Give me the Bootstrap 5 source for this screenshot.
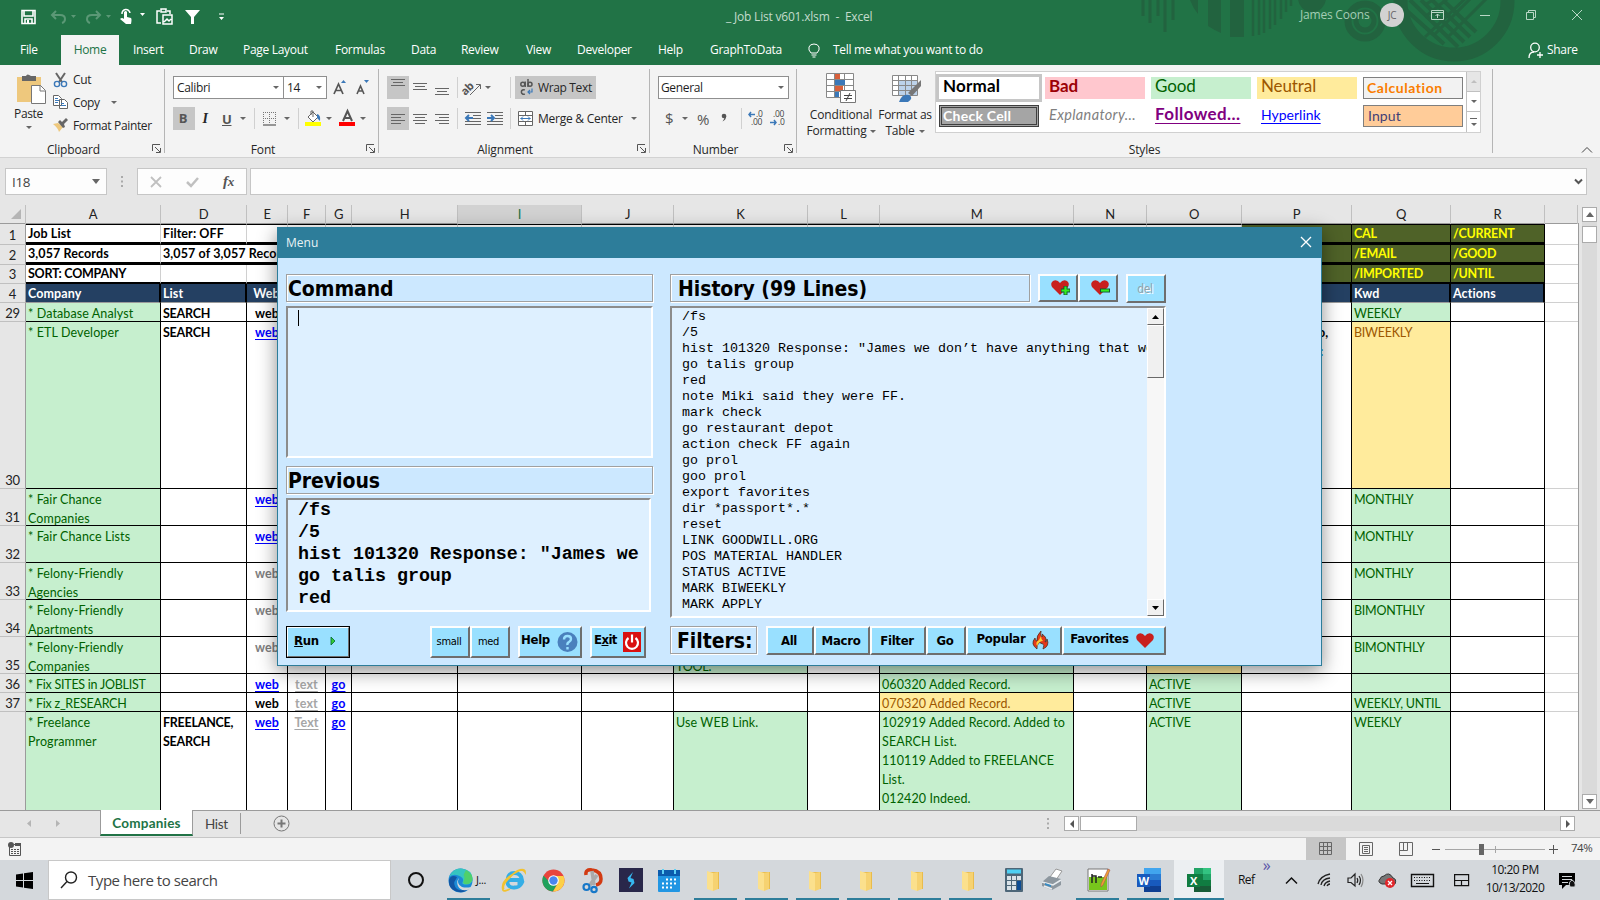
<!DOCTYPE html>
<html lang="en">
<head>
<meta charset="utf-8">
<title>_Job List v601.xlsm - Excel</title>
<link href="https://cdn.jsdelivr.net/npm/bootstrap@5.3.0/dist/css/bootstrap.min.css" rel="stylesheet">
<style>
:root{--xl:#217346;--ink:#262626}
body{width:1600px;height:900px;overflow:hidden;background:#e6e6e6;font:12px/16px "Open Sans","Noto Sans",sans-serif;color:var(--ink);letter-spacing:-.35px}
svg{display:block;flex:none;overflow:visible}
.gridrow{display:grid;align-items:center;white-space:nowrap}
.caret{width:0;height:0;border:3px solid transparent;border-top:3.5px solid #666;border-bottom:0}
/* title bar and tabs */
.titlezone{height:65px;background:var(--xl);color:#fff}
.titlezone .deco{left:1130px;top:0;overflow:hidden}
.quick{height:33px;margin-bottom:2px;letter-spacing:-.2px;grid-template-columns:20px 30px 36px 35px 36px 28px 33px 508px 574px 35px 43px 46px 46px 46px 60px}
.winctl{left:1300px;top:0;height:30px;letter-spacing:-.2px;grid-template-columns:80px 51px 48px 46px 46px 20px}
.ttl{color:#c3dccd}
.avatar{width:24px;height:24px;background:#d2d2d2;color:#666;font-size:10px}
.tabs{height:30px;letter-spacing:-.3px;grid-template-columns:20px 41px 58px 14px 56px 54px 92px 76px 50px 65px 51px 81px 52px 97px 26px 695px 19px 50px}
.tabs .on{background:#f3f3f3;color:var(--xl);line-height:30px;text-align:center}
/* ribbon */
.ribbon{height:93px;background:#f3f3f3;border-bottom:1px solid #d2d2d2}
.grp{position:relative;border-right:1px solid #b5b5b5;height:84px;margin-top:4px;flex:none}
.grp .cap{height:16px;line-height:17px;text-align:center;letter-spacing:-.15px}
.g1{width:165px}.g2{width:214px}.g3{width:271px}.g4{width:147px}.g5{width:696px}
.launch{position:absolute;right:3px;bottom:0}
.body{height:72px}
.clip{margin-top:-1px}
.clip>div{height:23px;gap:6px}
.combo{height:23px;background:#fff;border:1px solid #8f8f8f;line-height:20px;padding:0 4px;color:#1e1e1e}
.tog{background:#c6c6c6;height:23px}
.vsep{width:1px;height:21px;background:#d0d0d0}
.ggray{color:#555;font-weight:700;font-size:13px}
/* styles gallery */
.gallery{width:546px;height:62px;background:#fff;border:1px solid #d0d0d0;margin-top:2px}
.cells{display:grid;grid-template-columns:repeat(5,100px);align-content:start;gap:6px;padding:5px 0 0 3px;width:531px;font-family:Lato,sans-serif}
.cells div{height:22px;line-height:20px;padding-left:4px;white-space:nowrap}
.gs{width:14px;background:#fff;border-left:1px solid #c0c0c0}
.gs div{height:20px;border-bottom:1px solid #c0c0c0}
.cells .s-normal{outline:3px solid #c6c6c6;font:700 17px/18px Lato;color:#000;letter-spacing:.2px}
.cells .s-bad{background:#ffc7ce;color:#9c0006;font:700 17px/18px Lato;letter-spacing:-.1px}
.cells .s-good{background:#c6efce;color:#006100;font-size:17px;line-height:18px;letter-spacing:-.1px}
.cells .s-neutral{background:#ffeb9c;color:#9c5700;font-size:17px;line-height:18px;letter-spacing:-.1px}
.cells .s-calc{background:#f2f2f2;border:1px solid #7f7f7f;color:#fa7d00;font-weight:700;font-size:14px;letter-spacing:.55px;padding-left:3px}
.cells .s-check{background:#a5a5a5;border:3px double #3f3f3f;color:#fff;font-weight:700;font-size:14px;line-height:15px;padding-left:1px;letter-spacing:.25px}
.cells .s-expl{color:#7f7f7f;font-style:italic;font-size:14.5px;letter-spacing:.35px}
.cells .s-foll{color:#800080;font:700 17px/17px Lato;text-decoration:underline;text-underline-offset:3px;letter-spacing:.4px}
.cells .s-link{color:#00f;text-decoration:underline;font-size:14px;text-underline-offset:3px;letter-spacing:0}
.cells .s-input{background:#fc9;border:1px solid #7f7f7f;color:#3f3f76;font-size:14px;letter-spacing:.1px}
/* formula bar */
.fbar{height:47px;padding-top:10px;grid-template-columns:5px 102px 30px 110px 3px 1337px;align-items:start}
.fbox{height:27px;background:#fdfdfd;border:1px solid #c6c6c6}
/* sheet */
.sheet{height:605px;position:relative}
.cols,.srow{display:grid;grid-template-columns:26px 135px 86px 41px 38px 26px 106px 124px 92px 134px 72px 194px 73px 95px 110px 99px 94px 33px;width:1579px}
.cols{height:19px;font:13px/19px Lato;color:#222;text-align:center;border-bottom:1px solid #9b9b9b}
.cols div{border-right:1px solid #c0c0c0;line-height:19px}
.cols .sel{background:#d2d2d2;border-bottom:2px solid var(--xl);color:var(--xl)}
.cells-zone{height:586px;overflow:hidden;width:1579px;border-right:1px solid #9b9b9b}
.srow{font:12.5px/19px Lato,sans-serif;letter-spacing:.1px}
.srow>div{border-right:1px solid #000;border-bottom:1px solid #000;background:#fff;padding:1px 0 0 2px;overflow:hidden;color:#000;white-space:pre-line;font-weight:700}
.srow>.caps{letter-spacing:-.25px}
.srow>.num{background:#e6e6e6;border-right:1px solid #9b9b9b;border-bottom:1px solid #c0c0c0;font-weight:400;font-size:13px;display:flex;align-items:end;justify-content:center;padding:0;line-height:16px;letter-spacing:-.2px;color:#222}
.srow>.off{border-right:0;border-bottom-color:#d0d0d0}
.srow>.g{background:#c6efce;color:#006100;font-weight:400}
.srow>.y{background:#ffeb9c;color:#9c5700;font-weight:400}
.srow>.c{text-align:center;padding-left:0}
.srow>.k{color:#00f;text-decoration:underline;text-underline-offset:2px}
.srow>.f{color:#a6a6a6}.srow>.w{color:#808080}
.srow>.u{text-decoration:underline;text-underline-offset:2px}
.srow>.frag{padding-left:76px;line-height:19px}
.top>div{line-height:17px;padding-top:0;border-right-color:#d0d0d0;border-bottom-width:3px;white-space:nowrap}
.top>.spill{overflow:visible;border-right:0;z-index:1}
.r1>div:not(.num){border-top:1px solid #000}
.top>.off{border-top:0!important;border-bottom-width:1px}
.top>.o{background:#4f6228;color:#ff0;border-right:1px solid #000}
.top>.num{border-bottom-width:1px;padding-bottom:1px}
.r3>div:not(.num):not(.off){border-bottom-width:2px}
.head>div{background:#244062;color:#fff;line-height:17px;border-right-width:2px;border-bottom-color:#9b9b9b}
.head>.off{background:#fff}
.head>.num{border-right-width:1px}
.vs{right:3px;top:2px;width:15px;height:602px;background:#dadada}
.sb{background:#fff;border:1px solid #ababab;display:flex;align-items:center;justify-content:center}
/* tabs strip and status */
.strip{height:28px;padding-bottom:1px;border-top:1px solid #9b9b9b;border-bottom:1px solid #c6c6c6;position:relative;z-index:1;background:#e6e6e6;grid-template-columns:23px 28px 49px 93px 12px 35px 33px 773px 18px 15px 1px 57px 423px 15px 24px}
.strip .act{margin-top:-1px;height:26px;align-self:start;background:#fff;border-bottom:2px solid var(--xl);border-right:1px solid #9b9b9b;border-left:1px solid #9b9b9b;font:700 13.5px/26px Lato;color:var(--xl);text-align:center;letter-spacing:.2px}
.status{height:22px;background:#f3f3f3;grid-template-columns:8px 1298px 13px 40px 40px 33px 13px 100px 4px 22px 29px}
/* macro dialog */
.dlg{left:277px;top:227px;width:1045px;height:439px;background:#cce8ff;border:1px solid #2d7d9a;box-shadow:0 5px 18px rgba(0,0,0,.45);z-index:5;color:#000}
.dlg .bar{height:30px;background:#2d7d9a;color:#e8f2f5;font-size:12px;letter-spacing:0}
.dfont{font-family:"DejaVu Sans Condensed","DejaVu Sans",sans-serif;font-stretch:condensed;letter-spacing:-.3px}
.lbl{height:28px;border:1px solid #a0a0a0;box-shadow:1px 1px 0 #fff,inset 1px 1px 0 #fff;font-size:21px;font-weight:700;line-height:29px;white-space:nowrap;letter-spacing:-.05px}
.sunk{background:#def0ff;border:2px solid;border-color:#8c8c8c #fff #fff #8c8c8c;overflow:hidden;font-family:"Liberation Mono",monospace;letter-spacing:0;white-space:pre}
.bt{background:#99e0ff;border:2px solid;border-color:#fdfdfd #6e6e6e #6e6e6e #fdfdfd;height:32px;font-weight:700;font-size:13px;display:flex;align-items:center;justify-content:center;white-space:nowrap}
.left{width:367px;margin-left:8px}.right{width:496px;margin-left:17px}
.wb{width:17px;height:17px;background:#f0f0f0;border:1px solid;border-color:#fff #696969 #696969 #fff;display:flex;align-items:center;justify-content:center}
/* taskbar */
.task{height:40px;background:#d4d8dc;color:#111;grid-template-columns:48px 343px 50px 52px 42px 36px 44px 32px 44px repeat(6,51px) 34px 42px 51px 50px 50px 52px 30px 36px 26px 37px 35px 44px 62px 42px}
.task>div{height:40px;display:flex;align-items:center;justify-content:center;position:relative}
.task .run::after{content:"";position:absolute;bottom:0;height:2px;left:3px;right:5px;background:#2d7d9a}
.task .edge::after{left:6px;right:3px}
.task .full::after{left:0;right:0}
.task .fold{padding-right:7px}
.search{background:#fff;border:1px solid #c8c8c8;justify-content:flex-start!important;padding-left:11px;font-size:15px;color:#444;letter-spacing:-.45px}
</style>
</head>
<body>
<header class="titlezone position-relative">
<svg class="deco position-absolute" width="470" height="65" fill="none" stroke="#22633f">
<path d="M13 0V16M20 0V23M28 0V16M35 0V32M43 0V20" stroke-width="3"/>
<path d="M60 0h8v14Q63 8 60 0zM78 0h13v33Q84 30 78 26zM100 0h14v37h-14z" fill="#22633f" stroke="none"/>
<path d="M123 0v36M129 0v35M134 0v33M140 0v29M145 0v25M151 0v19M156 0v12M161 0v6" stroke-width="2.500"/>
<circle cx="182" cy="-2" r="14" fill="#22633f" stroke="none"/>
<circle cx="235" cy="21" r="17" stroke-width="7"/><circle cx="235" cy="21" r="9" stroke-width="5"/>
<circle cx="324" cy="1" r="53.500" stroke-width="14"/>
<path d="M280 0l48 47M291 0l43 42M302 0l38 37M313 0l33 32M276 10l38 34" stroke-width="4"/>
<path d="M295 5l12-8M295 17l27-22M295 37l44-42M305 34l38-38M318 37l42-42" stroke-width="3" transform="translate(0 0)"/>
</svg>
<div class="gridrow quick position-relative">
<span></span>
<svg width="16" height="16" fill="none" stroke="#fff" stroke-width="1.600"><path d="M2 1.500h13v13H2zM4 2v5h9V2M5 14v-4h7v4"/><path d="M8 11v3" stroke-width="2"/></svg>
<svg width="28" height="16" fill="none" stroke="#5b9876" stroke-width="2"><path d="M6 2L2 6l4 4M2 6h8q5 0 5 4 0 3-3 4"/><path d="M21 6h5l-2.500 3z" fill="#5b9876" stroke="none"/></svg>
<svg width="30" height="16" fill="none" stroke="#5b9876" stroke-width="2"><path d="M10 2l4 4-4 4M14 6H6Q1 6 1 10q0 3 3 4"/><path d="M20 6h5l-2.500 3z" fill="#5b9876" stroke="none"/></svg>
<svg width="30" height="17" fill="none" stroke="#fff"><path d="M1 6a4 4 0 1 1 8-1" stroke-width="1.500"/><path d="M3 4q2-2 3 0v5l4 1q1 1 0 6H5L-1 11q2-2 4 0z" fill="#fff" stroke="none"/><path d="M19 5h5l-2.500 3z" fill="#fff" stroke="none"/></svg>
<svg width="17" height="17" fill="none" stroke="#fff" stroke-width="1.500"><path d="M4 15H0V3h3M10 3h3v3M4 1h5v3H4z"/><path d="M6 7h9v9H6zM7 14l3-3 2 2 2-2"/></svg>
<svg width="17" height="16"><path d="M0 1h15l-6 7v7H6V8z" fill="#fff"/></svg>
<svg width="8" height="8"><path d="M1 .5h5v1H1zM1 4h5L3.500 7z" fill="#fff"/></svg>
<span class="ttl">_ Job List v601.xlsm &nbsp;-&nbsp; Excel</span>
</div>
<div class="gridrow winctl position-absolute">
<span style="color:#a3cdb4">James Coons</span>
<span class="avatar rounded-circle d-flex align-items-center justify-content-center">JC</span>
<svg width="14" height="12" fill="none" stroke="#b9d8c6"><path d="M.5 1.500h12v9H.5zM.5 3.500h12M6.500 9V5M4.500 7l2-2 2 2"/></svg>
<svg width="12" height="12" stroke="#b9d8c6"><path d="M1 6.500h10"/></svg>
<svg width="12" height="12" fill="none" stroke="#b9d8c6"><path d="M1.500 3.500h7v7h-7zM3.500 3V1.500h7v7H9"/></svg>
<svg width="12" height="12" stroke="#b9d8c6"><path d="M1 1l10 10M11 1L1 11"/></svg>
</div>
<nav class="gridrow tabs position-relative">
<span></span><span>File</span><span class="on">Home</span><span></span><span>Insert</span><span>Draw</span><span>Page Layout</span><span>Formulas</span><span>Data</span><span>Review</span><span>View</span><span>Developer</span><span>Help</span><span>GraphToData</span>
<svg width="14" height="16" fill="none" stroke="#fff"><path d="M4 11Q1 8 2 5t5-3 5 3-2 6zM4.500 13h5M5.500 15h3"/></svg>
<span>Tell me what you want to do</span>
<svg width="16" height="17" fill="none" stroke="#fff" stroke-width="1.300"><circle cx="7" cy="5.500" r="4.300"/><path d="M1 16q0-6 5-6M9 13h6M12 10v6"/></svg>
<span>Share</span>
</nav>
</header>

<section class="ribbon d-flex">
<div class="grp g1">
<div class="body d-flex">
<div class="d-flex flex-column align-items-center" style="width:29px;margin:4px 9px 0 14px">
<svg width="30" height="32"><path d="M3 4h24v25H3z" fill="#eec87d"/><path d="M8 3h4q1-3 5 0h5v5H8z" fill="#666"/><path d="M17.500 12.500h9l5 5v13h-14z" fill="#fff" stroke="#777"/><path d="M26 12v6h5" fill="none" stroke="#777"/></svg>
<span style="margin-top:1px">Paste</span><span class="caret" style="margin-top:4px"></span>
</div>
<div class="clip">
<div class="d-flex align-items-center"><svg width="15" height="16" fill="none" stroke="#666" stroke-width="2"><path d="M4 1l6 9M13 1L7 10"/><g stroke="#3b78b8" stroke-width="1.400"><circle cx="5" cy="12" r="2.600"/><circle cx="12" cy="12" r="2.600"/></g></svg>Cut</div>
<div class="d-flex align-items-center"><svg width="15" height="15" fill="#fff" stroke="#666"><path d="M1.500.5h5l3 3v7h-8zM7.500 4.500h5l3 3v6h-8z"/><path d="M3 3.500h3M3 5.500h4M3 7.500h3M9 8.500h3M9 10.500h5" stroke="#3b78b8"/></svg>Copy<span class="caret" style="margin-left:5px"></span></div>
<div class="d-flex align-items-center"><svg width="15" height="15"><path d="M1 6l5-1 5 4-4 5q-1-4-6-8z" fill="#eec87d"/><path d="M6 4l2-2 2 2 4-4 2 2-4 4 1 3-2 1z" fill="#666"/></svg>Format Painter</div>
</div></div>
<div class="cap" style="padding-right:17px">Clipboard</div><svg class="launch" width="9" height="9" fill="none" stroke="#555"><path d="M.5 7V.5H8M3 3l5 5M8.500 4v4.500H4"/></svg>
</div>

<div class="grp g2"><div class="body" style="padding:7px 0 0 8px">
<div class="gridrow" style="grid-template-columns:111px 43px 7px 23px 16px">
<div class="combo d-flex justify-content-between align-items-center" style="padding-left:3px">Calibri<span class="caret"></span></div><div class="combo d-flex justify-content-between align-items-center border-start-0" style="padding-left:3px">14<span class="caret"></span></div><span></span>
<svg width="14" height="16"><path d="M0 14L4.500 4 9 14M2 10.500h5" fill="none" stroke="#555" stroke-width="1.700"/><path d="M7 3h5l-2.500-3z" fill="#3b78b8"/></svg>
<svg width="14" height="16"><path d="M0 14l3.500-8L7 14M1.500 11h4" fill="none" stroke="#555" stroke-width="1.600"/><path d="M7 0h5l-2.500 3z" fill="#3b78b8"/></svg></div>
<div class="gridrow" style="margin-top:8px;grid-template-columns:22px 20px 26px 13px 9px 21px 14px 7px 21px 13px 21px 10px">
<span class="tog ggray text-center" style="line-height:22px;padding-right:2px">B</span><span class="text-center" style="font:italic 700 14px 'Liberation Serif'">I</span><span class="ggray d-flex align-items-center" style="gap:9px;padding-left:7px"><u>U</u><span class="caret"></span></span><span style="padding-left:13px"><i class="vsep d-block"></i></span>
<span></span><svg width="14" height="14" fill="none" stroke="#777"><path d="M.5 0v12M6.500 0v12M12.500 0v12M0 .5h13M0 6.500h13" stroke-dasharray="1 1"/><path d="M0 13h13" stroke-width="1.500"/></svg><span class="caret"></span><i class="vsep"></i>
<svg width="17" height="17"><path d="M3 7l5-5 5 5-5 5zM6 5V1h2v6" fill="#fff" stroke="#666"/><path d="M12 4q4 1 3 7l-3-3z" fill="#3b78b8"/><path d="M0 12h16v4H0z" fill="#ff0"/></svg><span class="caret"></span>
<svg width="17" height="17"><path d="M4 11L8.500 1 13 11M5.500 8h6" fill="none" stroke="#555" stroke-width="2"/><path d="M0 12h16v4H0z" fill="red"/></svg><span class="caret"></span></div>
</div><div class="cap" style="padding-right:17px">Font</div><svg class="launch" width="9" height="9" fill="none" stroke="#555"><path d="M.5 7V.5H8M3 3l5 5M8.500 4v4.500H4"/></svg></div>

<div class="grp g3"><div class="body" style="padding:7px 0 0 8px">
<div class="gridrow" style="grid-template-columns:22px 22px 26px 8px 20px 25px 5px 81px">
<span class="tog d-flex justify-content-center"><svg width="14" height="14" stroke="#666" style="margin-top:2px"><path d="M0 1.500h14M2 4.500h10M0 7.500h14"/></svg></span><svg width="14" height="14" stroke="#666" class="mx-auto"><path d="M0 2.500h14M2 5.500h10M0 8.500h14"/></svg><svg width="14" height="14" stroke="#666" style="margin-left:4px"><path d="M0 7.500h14M2 10.500h10M0 13.500h14"/></svg><i class="vsep"></i>
<svg width="18" height="18" stroke="#666" fill="none"><text x="-3" y="11" transform="rotate(-45 6 10)" font-size="11" fill="#555" stroke="none" font-weight="700">ab</text><path d="M5 16L15 6M11 5.500h4.500V10"/></svg><span class="caret"></span><i class="vsep"></i>
<span class="tog d-flex align-items-center" style="padding-left:5px;gap:5px"><svg width="13" height="17" fill="none" stroke="#555" stroke-width="1.500"><circle cx="2.800" cy="5.200" r="2"/><path d="M5.200 2.500v5.500M8 0v8M4.800 11a2.300 2.300 0 1 0 0 4"/><circle cx="10" cy="5.200" r="2"/><path d="M12 9.500v3.500H8M10 11l-2 2 2 2" stroke="#3b78b8" stroke-width="1.200"/></svg>Wrap Text</span></div>
<div class="gridrow" style="margin-top:8px;grid-template-columns:22px 22px 26px 8px 22px 23px 5px 112px 10px">
<span class="tog d-flex align-items-center justify-content-center"><svg width="14" height="12" stroke="#666"><path d="M0 1.500h14M0 4.500h10M0 7.500h14M0 10.500h10"/></svg></span><svg width="14" height="12" stroke="#666" class="mx-auto"><path d="M0 1.500h14M2 4.500h10M0 7.500h14M2 10.500h10"/></svg><svg width="14" height="12" stroke="#666" style="margin-left:4px"><path d="M0 1.500h14M4 4.500h10M0 7.500h14M4 10.500h10"/></svg><i class="vsep"></i>
<svg width="17" height="14"><path d="M0 .5h16M8 3.500h8M8 6.500h8M0 9.500h16M0 12.500h16" stroke="#666"/><path d="M1 6h7M4 3L1 6l3 3" stroke="#3b78b8" stroke-width="2" fill="none"/></svg><svg width="17" height="14"><path d="M0 .5h16M8 3.500h8M8 6.500h8M0 9.500h16M0 12.500h16" stroke="#666"/><path d="M0 6h7M4 3l3 3-3 3" stroke="#3b78b8" stroke-width="2" fill="none"/></svg><i class="vsep"></i>
<span class="d-flex align-items-center" style="gap:5px;padding-left:3px"><svg width="15" height="15" fill="#fff" stroke="#666"><path d="M.5.5h14v14H.5zM.5 4.500h14M.5 10.500h14M7.500 0v4M7.500 11v4"/><path d="M2.500 7.500h10M5 5.500l-2 2 2 2M10 5.500l2 2-2 2" stroke="#3b78b8" fill="none"/></svg><span style="letter-spacing:-.25px">Merge &amp; Center</span></span><span class="caret" style="margin-left:4px"></span></div>
</div><div class="cap" style="padding-right:18px">Alignment</div><svg class="launch" width="9" height="9" fill="none" stroke="#555"><path d="M.5 7V.5H8M3 3l5 5M8.500 4v4.500H4"/></svg></div>

<div class="grp g4"><div class="body" style="padding:7px 0 0 8px">
<div class="combo d-flex justify-content-between align-items-center" style="width:131px;padding-left:2px">General<span class="caret"></span></div>
<div class="gridrow" style="margin-top:8px;height:23px;color:#555;grid-template-columns:7px 17px 15px 24px 20px 7px 22px 18px"><span></span><span style="font-size:15px;margin-top:-2px">$</span><span class="caret"></span><span style="font-size:15px">%</span><svg width="6" height="9" style="margin-top:-2px"><circle cx="3" cy="3" r="2.300" fill="#555"/><path d="M5.300 3Q5 7 1.500 8.500 3.500 6 3.500 4z" fill="#555"/></svg><i class="vsep"></i>
<svg width="16" height="15"><g font-size="8.500" fill="#444" letter-spacing="-.3"><text x="8" y="6">.0</text><text x="3" y="14">.00</text></g><path d="M1 3.500h6M3 1L1 3.500 3 6" stroke="#3b78b8" fill="none" stroke-width="1.500"/></svg>
<svg width="16" height="15"><g font-size="8.500" fill="#444" letter-spacing="-.3"><text x="3" y="6">.00</text><text x="8" y="14">.0</text></g><path d="M0 11.500h6M4 9l2 2.500L4 14" stroke="#3b78b8" fill="none" stroke-width="1.500"/></svg></div>
</div><div class="cap" style="padding-right:15px">Number</div><svg class="launch" width="9" height="9" fill="none" stroke="#555"><path d="M.5 7V.5H8M3 3l5 5M8.500 4v4.500H4"/></svg></div>

<div class="grp g5"><div class="body d-flex" style="padding-left:9px">
<div class="d-flex flex-column align-items-center text-center" style="width:70px;padding-top:4px;letter-spacing:-.15px"><svg width="31" height="31"><path d="M.5.5h27v24H.5zM.5 6.500h27M.5 12.500h27M.5 18.500h27M8.500 0v24M18.500 0v24" fill="#fff" stroke="#888"/><path d="M9 1h5v5H9zM9 13h8v5H9z" fill="#d9603b"/><path d="M9 7h10v5H9zM9 19h4v5H9z" fill="#3b78b8"/><path d="M14.500 17.500h15v12h-15z" fill="#fff" stroke="#777"/><path d="M18 22.500h8M18 25.500h8M24 20l-4 8" stroke="#444"/></svg><span style="margin-top:3px">Conditional</span><span class="d-flex align-items-center" style="gap:3px">Formatting<i class="caret"></i></span></div>
<div class="d-flex flex-column align-items-center text-center" style="width:58px;padding-top:4px;letter-spacing:-.25px"><svg width="31" height="31"><path d="M2.500 2.500h25v20h-25z" fill="#fff"/><path d="M9 7h18v15H9z" fill="#bcd2ea"/><path d="M2.500 2.500h25v20h-25zM2.500 7.500h25M2.500 12.500h25M2.500 17.500h25M8.500 2v20M15.500 2v20M21.500 2v20" fill="none" stroke="#888"/><path d="M31 7v6l-9 10-4-3z" fill="#777"/><path d="M9 29q3-9 10-7 5 3-1 7z" fill="#3b78b8"/></svg><span style="margin-top:3px">Format as</span><span class="d-flex align-items-center gap-1">Table<i class="caret"></i></span></div>
<div class="gallery d-flex" style="margin-left:1px">
<div class="cells"><div class="s-normal">Normal</div><div class="s-bad">Bad</div><div class="s-good">Good</div><div class="s-neutral">Neutral</div><div class="s-calc">Calculation</div><div class="s-check">Check Cell</div><div class="s-expl">Explanatory...</div><div class="s-foll">Followed...</div><div class="s-link">Hyperlink</div><div class="s-input">Input</div></div>
<div class="gs"><div class="d-flex align-items-center justify-content-center" style="background:#e6e6e6"><i class="caret" style="transform:rotate(180deg);opacity:.3"></i></div><div class="d-flex align-items-center justify-content-center"><i class="caret"></i></div><div class="d-flex flex-column gap-1 align-items-center justify-content-center border-0"><i style="width:7px;height:1px;background:#666"></i><i class="caret"></i></div></div>
</div></div>
<div class="cap">Styles</div></div>
<svg width="12" height="8" fill="none" stroke="#444" style="margin:81px 0 0 88px"><path d="M1 6.500L6 1.500l5 5"/></svg>
</section>

<section class="gridrow fbar">
<span></span><div class="fbox d-flex align-items-center justify-content-between" style="padding:0 6px;font-size:13.500px;color:#444">I18<svg width="8" height="5"><path d="M0 0h8L4 5z" fill="#666"/></svg></div>
<div class="text-center" style="padding-top:8px"><svg width="4" height="12" class="mx-auto"><path d="M1 0h2v2H1zM1 4.500h2v2H1zM1 9h2v2H1z" fill="#aaa"/></svg></div>
<div class="fbox d-flex align-items-center" style="gap:24px;padding-left:12px"><svg width="12" height="12" stroke="#c0c0c0" stroke-width="1.800"><path d="M1 1l10 10M11 1L1 11"/></svg><svg width="13" height="12" fill="none" stroke="#c0c0c0" stroke-width="2.500"><path d="M1 6l4 4 7-8"/></svg><span style="font:italic 700 15px 'Liberation Serif';color:#555">f<small>x</small></span></div>
<span></span><div class="fbox d-flex align-items-center justify-content-end" style="padding-right:3px"><svg width="9" height="7" fill="none" stroke="#555" stroke-width="2"><path d="M1 1.500l3.500 3.500L8 1.500"/></svg></div>
</section>

<main class="sheet">
<div class="cols" id="cols"></div>
<div class="cells-zone" id="rows"></div>
<div class="vs position-absolute d-flex flex-column"><div class="sb" style="height:15px"><svg width="8" height="5"><path d="M0 5h8L4 0z" fill="#666"/></svg></div><div class="sb" style="height:17px;margin-top:4px"></div><div class="sb mt-auto" style="height:15px"><svg width="8" height="5"><path d="M0 0h8L4 5z" fill="#666"/></svg></div></div>
</main>

<div class="gridrow strip">
<span></span><svg width="10" height="9"><path d="M8 1v7L4 4.500z" fill="#b5b5b5"/></svg><svg width="10" height="9"><path d="M5 1v7l4-3.500z" fill="#b5b5b5"/></svg>
<span class="act">Companies</span><span></span><span style="font:13.500px Lato;color:#444">Hist</span><i class="vsep" style="background:#9b9b9b"></i>
<svg width="17" height="17" fill="none" stroke="#777"><circle cx="8.500" cy="8.500" r="7.500"/><path d="M4.500 8.500h8M8.500 4.500v8" stroke-width="2"/></svg>
<svg width="4" height="12"><path d="M1 0h2v2H1zM1 4.500h2v2H1zM1 9h2v2H1z" fill="#aaa"/></svg>
<div class="sb" style="height:15px"><svg width="6" height="8"><path d="M5 0v8L1 4z" fill="#555"/></svg></div><span></span><div class="sb" style="height:15px"></div><div style="height:15px;background:#dadada"></div><div class="sb" style="height:15px"><svg width="6" height="8"><path d="M1 0v8l4-4z" fill="#555"/></svg></div>
</div>

<div class="gridrow status">
<span></span><svg width="14" height="14"><path d="M1.500 5v8.500h11V2.500H6" fill="none" stroke="#555"/><path d="M7 1h6v3H7z" fill="#555"/><circle cx="3" cy="3" r="3" fill="#555"/><path d="M3 7.500h9M3 9.500h9M3 11.500h9" stroke="#555" stroke-dasharray="2 1"/></svg>
<span style="background:#c6c6c6;height:22px"></span>
<div style="background:linear-gradient(90deg,#c6c6c6 27px,transparent 0);height:22px;padding-top:4px"><svg width="14" height="14" fill="none" stroke="#666"><path d="M.5.5h12v12H.5zM.5 4.500h12M.5 8.500h12M4.500 0v12M8.500 0v12"/></svg></div>
<svg width="15" height="14" fill="none" stroke="#666"><path d="M.5.5h13v13H.5zM3.500 3.500h7v8h-7zM5 5.500h4M5 7.500h4M5 9.500h4"/></svg>
<svg width="15" height="14" fill="none" stroke="#666"><path d="M.5.5h13v13H.5zM.5 8.500h8V1M4.500 1v7"/></svg>
<svg width="9" height="9" stroke="#555"><path d="M0 4.500h8"/></svg>
<svg width="100" height="14"><path d="M0 7.500h100M50.500 4v7" stroke="#a6a6a6"/><path d="M34 2h5v11h-5z" fill="#666"/></svg><span></span>
<svg width="9" height="9" stroke="#555"><path d="M0 4.500h9M4.500 0v9"/></svg><span style="font-size:11.500px;letter-spacing:-.5px;color:#444;margin-top:-2px">74%</span>
</div>

<section class="dlg position-absolute">
<div class="bar d-flex align-items-center justify-content-between" style="padding:0 9px 0 8px">Menu<svg width="12" height="12" stroke="#fff" stroke-width="1.300"><path d="M1 0l10 10M11 0L1 10"/></svg></div>
<div class="d-flex dfont" style="padding-top:16px">
<div class="left">
<div class="lbl" style="padding-left:1px">Command</div>
<div class="sunk" style="height:152px;margin-top:4px;padding:2px 10px"><svg width="2" height="17"><path d="M.5 0v16" stroke="#000"/></svg></div>
<div class="lbl" style="margin-top:8px;padding-left:1px">Previous</div>
<div class="sunk" style="width:365px;height:114px;margin-top:4px;padding-left:10px;font-weight:700;font-size:18.320px;line-height:22px">/fs
/5
hist 101320 Response: "James we
go talis group
red</div>
<div class="d-flex" style="margin-top:14px">
<div class="bt" style="width:64px;outline:1px solid #000;outline-offset:-1px;gap:11px;padding:0 5px 3px 0"><span><u>R</u>un</span><svg width="7" height="10"><path d="M1 1v8l4-4z" fill="#3c3" stroke="#063" stroke-width=".8"/></svg></div>
<div class="bt" style="width:40px;margin-left:80px;font-weight:400;font-size:11px;padding-right:2px">small</div><div class="bt" style="width:40px;font-weight:400;font-size:11px;padding-right:3px">med</div>
<div class="bt" style="width:64px;margin-left:8px;gap:7px;padding-right:1px"><span style="margin-top:-5px">Help</span><svg width="21" height="22"><circle cx="10.500" cy="11" r="10" fill="#4a80bd"/><path d="M7 8.500q0-3.500 3.500-3.500t3.500 3q0 2-2 3t-1.500 3M10.500 16v2.500" fill="none" stroke="#99e0ff" stroke-width="2.400"/></svg></div>
<div class="bt" style="width:56px;margin-left:8px;gap:6px;padding-right:1px"><span style="margin-top:-4px;letter-spacing:-.6px">E<u>x</u>it</span><svg width="18" height="20"><path d="M0 0h18v20H0z" fill="#d9100f"/><path d="M5.500 6a6 6 0 1 0 7 0M9 2.500v8" stroke="#fff" stroke-width="2.200" fill="none"/></svg></div>
</div></div>
<div class="right">
<div class="d-flex"><div class="lbl" style="width:360px;padding-left:7px">History (99 Lines)</div>
<div class="bt" style="width:40px;height:28px;margin-left:8px;padding-left:7px"><svg width="22" height="18"><path d="M9 16L1 8Q-1 4 2 2q4-2 7 2 3-4 7-2 3 2 1 6z" fill="#c8201e"/><path d="M14.500 7v9M10 11.500h9" stroke="#153" stroke-width="4"/><path d="M14.500 7.500v8M10.500 11.500h8" stroke="#3e2" stroke-width="2.200"/></svg></div>
<div class="bt" style="width:40px;height:28px;padding-left:7px"><svg width="22" height="18"><path d="M9 16L1 8Q-1 4 2 2q4-2 7 2 3-4 7-2 3 2 1 6z" fill="#c8201e"/><path d="M9 11.500h10" stroke="#153" stroke-width="4"/><path d="M10 11.500h8" stroke="#3e2" stroke-width="2.200"/></svg></div>
<div class="bt" style="width:40px;height:29px;margin:0 0 -1px 8px;padding-right:2px;font-weight:400;font-size:12px;color:#8fa3ad;text-shadow:1px 1px 0 #fff">del</div></div>
<div class="sunk d-flex" style="height:312px;margin-top:4px"><div class="flex-grow-1 overflow-hidden" style="width:0;padding:1px 0 0 10px;font-size:13.330px;line-height:16px">/fs
/5
hist 101320 Response: "James we don’t have anything that would
go talis group
red
note Miki said they were FF.
mark check
go restaurant depot
action check FF again
go prol
goo prol
export favorites
dir *passport*.*
reset
LINK GOODWILL.ORG
POS MATERIAL HANDLER
STATUS ACTIVE
MARK BIWEEKLY
MARK APPLY</div><div class="d-flex flex-column" style="width:17px;background:#f7f7f7"><div class="wb"><svg width="7" height="4"><path d="M0 4h7L3.500 0z"/></svg></div><div class="wb" style="height:53px"></div><div class="wb mt-auto"><svg width="7" height="4"><path d="M0 0h7L3.500 4z"/></svg></div></div></div>
<div class="d-flex" style="margin-top:8px"><div class="lbl" style="width:87px;padding-left:6px;margin-right:9px">Filters:</div>
<div class="bt" style="width:48px;height:29px;padding-right:2px">All</div><div class="bt" style="width:56px;height:29px;padding-right:2px">Macro</div><div class="bt" style="width:56px;height:29px;padding-right:2px">Filter</div><div class="bt" style="width:40px;height:29px;padding-right:2px">Go</div>
<div class="bt" style="width:96px;height:29px;gap:7px;padding-right:2px"><span style="margin-top:-4px">Popular</span><svg width="17" height="19"><path d="M5 18Q-2 13 3 7q0 3 2 3-1-5 4-10-1 4 1 6 1-2 0-3 6 4 3 8 2 0 2-3 3 7-4 10 2-4-1-6-1 2-2-1-4 3-3 7z" fill="#e5391b" stroke="#421" stroke-width=".7"/><path d="M5 15q-2-4 2-6l2-4q0 3 2 5-4 0-6 5z" fill="#fc3"/></svg></div>
<div class="bt" style="width:104px;height:29px;gap:7px;padding-right:4px"><span style="margin-top:-4px">Favorites</span><svg width="18" height="17"><path d="M9 16L1 8Q-1 4 2 2q4-2 7 2 3-4 7-2 3 2 1 6z" fill="#c8201e"/></svg></div></div>
</div></div>
</section>

<footer class="gridrow task">
<div><svg width="17" height="17"><path d="M0 2.500l7-1v6.500H0zM8 1.300L17 0v8H8zM0 9h7v6.500l-7-1zM8 9h9v8l-9-1.300z"/></svg></div>
<div class="search"><svg width="18" height="18" fill="none" stroke="#222" stroke-width="1.400"><circle cx="11" cy="6.500" r="5.500"/><path d="M7 10.500L1 17"/></svg><span style="margin-left:10px">Type here to search</span></div>
<div><svg width="18" height="18" fill="none" stroke="#111" stroke-width="2"><circle cx="9" cy="9" r="7"/></svg></div>
<div class="run edge" style="gap:3px;font-size:11px"><svg width="25" height="25"><circle cx="12.500" cy="12.500" r="12" fill="#1b8ad6"/><path d="M1 9Q5 0 13 .5q11 1 11.500 10 0 6-6 6-5 0-4-2 2-4-2-6Q6 5 1 9z" fill="#36c5c0"/><path d="M18 2q7 4 6.500 10-2 5-8 4-2-1-1-3 2-3 0-6z" fill="#4fd06b"/><path d="M8 11q-4 5 1 10 5 3 12-1-4 5-10 4Q0 22 1 12q2-6 8-3z" fill="#1256a3"/><path d="M11 10q-3 6 3 9 4 1 9 0 -1 3-4 3-7 1-9-4-2-5 1-8z" fill="#d4d8dc"/></svg>J...</div>
<div><svg width="24" height="24" fill="none"><path d="M6 12h14q-1-7-7.500-7T5.500 12.500t7 7q5 0 7-4h-4" stroke="#35aee6" stroke-width="3.800"/><path d="M2 21Q-1 18 9 8T23 4q0-3-4-2T7 9 1 22q1 2 7-1" stroke="#f2c230" stroke-width="1.800"/></svg></div>
<div><svg width="23" height="23"><circle cx="11.500" cy="11.500" r="11" fill="#e8453c"/><path d="M1.500 6.500A11 11 0 0 0 11 22.500l5-9-9-1z" fill="#1fa15d"/><path d="M11 22.500A11 11 0 0 0 21.500 7H12l4 7z" fill="#fdd047"/><circle cx="11.500" cy="11.500" r="5.300" fill="#fff"/><circle cx="11.500" cy="11.500" r="4.200" fill="#4a86ee"/></svg></div>
<div><svg width="22" height="25" fill="none"><path d="M4 7Q3 1 10 2q9 1 9 9 0 5-5 6" stroke="#d23a12" stroke-width="3.500"/><path d="M10 3l2 14M15 7l-7 10" stroke="#aaa" stroke-width="3.500"/><circle cx="4.500" cy="19" r="3" stroke="#1878c8" stroke-width="2.200"/><circle cx="12" cy="21.500" r="2.700" stroke="#1878c8" stroke-width="2.200"/></svg></div>
<div><svg width="24" height="24"><path d="M0 0h24v24H0z" fill="#29274a"/><path d="M14 4l-5.500 6 1 3.500 3 1-2.500 6 5.500-5.500-1-4-3-1z" fill="#35b8f0"/></svg></div>
<div><svg width="22" height="23"><rect y="1" width="22" height="22" rx="1" fill="#2196e3"/><path d="M0 1h22v6H0z" fill="#0b5cad"/><path d="M5 0v5M17 0v5" stroke="#5cd0f5" stroke-width="2"/><path d="M8 10.500h11M4 14.500h15M4 18.500h11" stroke="#fff" stroke-width="2" stroke-dasharray="2 2"/></svg></div>
<div class="run fold"></div><div class="run fold"></div><div class="run fold"></div><div class="run fold"></div><div class="run fold"></div><div class="run fold"></div>
<div><svg width="18" height="24"><rect width="18" height="24" rx="1" fill="#4d6678"/><path d="M2 1.500h14v4H2z" fill="#4dd0f4"/><path d="M2 8h4v4H2zM7 8h4v4H7zM12 8h4v4h-4zM2 13h4v4H2zM7 13h4v4H7zM2 18h4v4H2zM7 18h4v4H7z" fill="#d9e2e8"/><path d="M12 13h4v9h-4z" fill="#0c4c94"/></svg></div>
<div><svg width="23" height="22"><path d="M9 8l6-8 6 2-6 9z" fill="#fff" stroke="#999"/><path d="M1 13l7-6 12 3v6l-9 5-10-4z" fill="#8d979f"/><path d="M1 13l11 3 8-5M3 17l8 3" stroke="#e8ecef" fill="none" stroke-width="1.500"/><path d="M4 14l6 2v2l-6-2z" fill="#378bc4"/></svg></div>
<div class="run"><svg width="24" height="24"><path d="M1 1h20v22H1z" fill="#fff" stroke="#777"/><path d="M2 9h18v13H2z" fill="#77c51c"/><path d="M5 6v9M5 8h4v7M11 9h4" stroke="#222" stroke-width="1.500" fill="none"/><path d="M21 1l2 1-7 15-2 2v-3z" fill="#f0a030" stroke="#a55" stroke-width=".6"/></svg></div>
<div class="run"><svg width="25" height="24"><path d="M7 0h17v6H7z" fill="#41a5ee"/><path d="M7 6h17v6H7z" fill="#2b7cd3"/><path d="M7 12h17v6H7z" fill="#185abd"/><path d="M7 18h17v6H7z" fill="#103f91"/><path d="M0 6h13v13H0z" fill="#185abd"/><text x="1.500" y="16.500" font-size="11" font-weight="700" fill="#fff">W</text></svg></div>
<div class="run full" style="background:#eceff2"><svg width="25" height="24"><path d="M7 0h17v12H7z" fill="#21a366"/><path d="M16 0h8v6h-8z" fill="#33c481"/><path d="M7 6h9v12H7z" fill="#107c41"/><path d="M16 12h8v6h-8z" fill="#107c41"/><path d="M7 18h17v6H7z" fill="#185c37"/><path d="M0 6h13v13H0z" fill="#107c41"/><text x="3" y="16.500" font-size="11" font-weight="700" fill="#fff">X</text></svg></div>
<div style="gap:8px;letter-spacing:-.5px;padding-left:8px">Ref<span style="font-size:16px;color:#5a54a8;margin-top:-30px">»</span></div>
<div><svg width="13" height="9" fill="none" stroke="#111" stroke-width="1.500"><path d="M1 7.500l5.500-5.500 5.500 5.500"/></svg></div>
<div><svg width="14" height="14" fill="none" stroke="#222" stroke-width="1.300"><path d="M1 11Q3 3 13 1M4 12q1-6 9-7M7 13q1-4 6-5M10 13q1-2 3-2"/></svg></div>
<div><svg width="17" height="15" fill="none" stroke="#222" stroke-width="1.200"><path d="M1 5h3l4-4v12L4 9.500H1zM10 5q1.500 2 0 5M12 3q3 4 0 9"/><path d="M14 1q4 6 0 13" stroke="#888"/></svg></div>
<div><svg width="18" height="18"><path d="M4 13q-5-2-2-5 1-3 4-3 5-5 9 2 4 1 2 6z" fill="#777" stroke="#333"/><circle cx="12" cy="12" r="5" fill="#e0262b"/><path d="M10 10l4 4M14 10l-4 4" stroke="#fff" stroke-width="1.300"/></svg></div>
<div><svg width="23" height="13" fill="none" stroke="#111"><path d="M.5.5h22v12H.5z" stroke-width="1.400"/><path d="M3 3.500h17M3 6.500h17" stroke-dasharray="1 1.500"/><path d="M5 9.500h13"/></svg></div>
<div><svg width="16" height="13" fill="none" stroke="#111" stroke-width="1.200"><path d="M.6.6h14v11H.6zM.6 6.500h14M7.500 6.500v5"/></svg></div>
<div class="flex-column" style="line-height:18px;letter-spacing:-.5px;padding-bottom:2px"><span>10:20 PM</span><span>10/13/2020</span></div>
<div><svg width="17" height="17"><path d="M0 1h16v12H7l-4 4v-4H0z"/><path d="M3 4.500h10M3 7.500h10M3 10.500h6" stroke="#d4d8dc"/><path d="M11 15q-2-5 2-7 4 2 3 7z" fill="#111" stroke="#d4d8dc"/></svg></div>
</footer>

<script src="https://cdn.jsdelivr.net/npm/bootstrap@5.3.0/dist/js/bootstrap.bundle.min.js"></script>
<script>
const letters=['A','D','E','F','G','H','I','J','K','L','M','N','O','P','Q','R'];
document.getElementById('cols').innerHTML='<div class="d-flex justify-content-end"><svg width="13" height="14"><path d="M9 4v10H-1z" fill="#b5b5b5"/></svg></div>'
 +letters.map(l=>`<div class="${l==='I'?'sel':''}">${l}</div>`).join('')+'<div></div>';
// Each row: number, height, row class, cells as column -> [text, classes]
const green=t=>[t,'g'], link=t=>[t,'c k'];
const olive=(q,r)=>({P:['','o'],Q:[q,'o'],R:[r,'o']});
const rows=[
 [1,21,'top r1',{A:['Job List'],D:['Filter: OFF'],...olive('CAL','/CURRENT')}],
 [2,20,'top',{A:['3,057 Records'],D:['3,057 of 3,057 Records','spill'],...olive('/EMAIL','/GOOD')}],
 [3,19,'top r3',{A:['SORT: COMPANY'],...olive('/IMPORTED','/UNTIL')}],
 [4,19,'head',{A:['Company'],D:['List'],E:['Web','c'],Q:['Kwd'],R:['Actions']}],
 [29,19,'',{A:green('* Database Analyst'),D:['SEARCH'],E:['web','c'],Q:green('WEEKLY')}],
 [30,167,'',{A:green('* ETL Developer'),D:['SEARCH'],E:link('web'),P:['o,\n<span style="color:#0070c0;margin-left:2px">:</span>','frag'],Q:['BIWEEKLY','y']}],
 [31,37,'',{A:green('* Fair Chance\nCompanies'),E:link('web'),Q:green('MONTHLY')}],
 [32,37,'',{A:green('* Fair Chance Lists'),E:link('web'),Q:green('MONTHLY')}],
 [33,37,'',{A:green('* Felony-Friendly\nAgencies'),E:['web','c w'],Q:green('MONTHLY')}],
 [34,37,'',{A:green('* Felony-Friendly\nApartments'),E:['web','c w'],Q:green('BIMONTHLY')}],
 [35,37,'',{A:green('* Felony-Friendly\nCompanies'),E:['web','c w'],K:green('\nTOOL.'),M:green(''),O:['','y'],Q:green('BIMONTHLY')}],
 [36,19,'',{A:green('* Fix SITES in JOBLIST'),E:link('web'),F:['text','c f u'],G:link('go'),M:green('060320 Added Record.'),O:green('ACTIVE'),Q:green('')}],
 [37,19,'',{A:green('* Fix z_RESEARCH'),E:['web','c'],F:['text','c f u'],G:link('go'),M:['070320 Added Record.','y'],O:green('ACTIVE'),Q:green('WEEKLY, UNTIL')}],
 ['',99,'',{A:green('* Freelance\nProgrammer'),D:['FREELANCE,\nSEARCH'],E:link('web'),F:['Text','c f u'],G:link('go'),K:green('Use WEB Link.'),M:green('102919 Added Record. Added to\nSEARCH List.\n110119 Added to FREELANCE\nList.\n012420 Indeed.'),O:green('ACTIVE'),Q:green('WEEKLY')}]
];
// Labels made mostly of capitals are set slightly tighter
const tight=t=>(t.match(/[A-Z]/g)||[]).length>t.length*.45?' caps':'';
document.getElementById('rows').innerHTML=rows.map(([n,h,c,d])=>`<div class="srow ${c}" style="height:${h}px"><div class="num">${n}</div>`
 +letters.map(l=>{const [t='',k='']=d[l]||[];return `<div class="${k}${tight(t)}">${t}</div>`}).join('')+'<div class="off"></div></div>').join('');
document.querySelectorAll('.fold').forEach(f=>f.innerHTML='<svg width="15" height="23"><path d="M4 3h9v17H4z" fill="#e9bc4c"/><path d="M1 2l6 2v18l-6-2z" fill="#fbe08d"/><path d="M7 4l5-1v17l-5 2z" fill="#f6d271"/></svg>');
</script>
</body>
</html>
